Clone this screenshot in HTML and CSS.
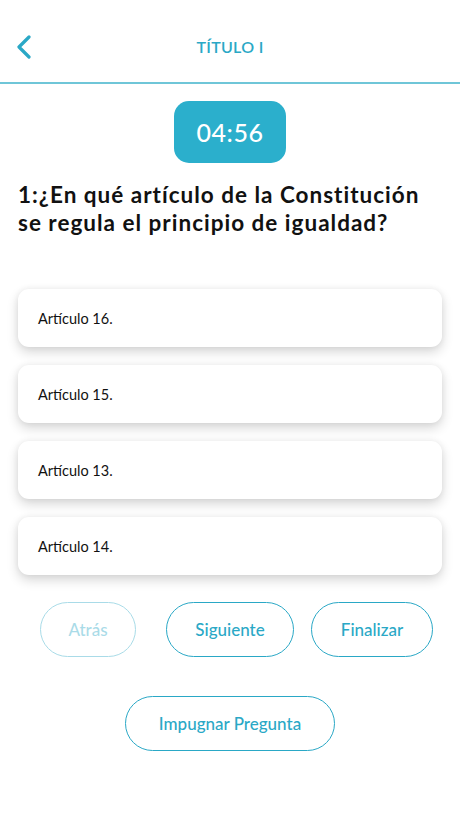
FILE: index.html
```html
<!DOCTYPE html>
<html lang="es">
<head>
<meta charset="utf-8">
<title>Título I</title>
<link rel="stylesheet" href="styles.css">
</head>
<body>
<header class="topbar">
  <button class="back" aria-label="Volver">
    <svg width="16" height="24" viewBox="0 0 16 24"><path d="M13 2 L3 12 L13 22" fill="none" stroke="#2aa8c6" stroke-width="3.2" stroke-linecap="round" stroke-linejoin="round"/></svg>
  </button>
  <h1 class="title">TÍTULO I</h1>
</header>
<main class="content">
  <div class="timer-wrap"><div class="timer">04:56</div></div>
  <p class="question">1:¿En qué artículo de la Constitución se regula el principio de igualdad?</p>
  <ul class="answers">
    <li class="answer">Artículo 16.</li>
    <li class="answer">Artículo 15.</li>
    <li class="answer">Artículo 13.</li>
    <li class="answer">Artículo 14.</li>
  </ul>
  <div class="nav">
    <button class="pill pill-disabled pill-back">Atrás</button>
    <button class="pill pill-next">Siguiente</button>
    <button class="pill pill-end">Finalizar</button>
  </div>
  <div class="report">
    <button class="pill pill-report">Impugnar Pregunta</button>
  </div>
</main>
</body>
</html>
```
FILE: styles.css
```css
* { box-sizing: border-box; }
html, body { margin: 0; padding: 0; background: #fff; }
body {
  width: 460px;
  height: 818px;
  font-family: "Lato", "Noto Sans", sans-serif;
  color: #111;
  overflow: hidden;
}
.topbar {
  height: 84px;
  padding-top: 35px;
  border-bottom: 2px solid #6fc6d8;
  display: flex;
  justify-content: center;
  position: relative;
}
.back {
  position: absolute;
  left: 15px;
  top: 35px;
  padding: 0;
  border: 0;
  background: none;
  width: 18px;
  height: 26px;
}
.title {
  margin: 0;
  font-size: 16px;
  line-height: 24px;
  font-weight: 600;
  color: #2aa8c6;
  letter-spacing: 0.3px;
}
.content { padding: 17px 18px 0; }
.timer-wrap { display: flex; justify-content: center; }
.timer {
  width: 112px;
  height: 62px;
  border-radius: 15px;
  background: #2bafcc;
  color: #fff;
  font-size: 25px;
  font-weight: 500;
  display: flex;
  align-items: center;
  justify-content: center;
  letter-spacing: 0.5px;
}
.question {
  margin: 18px 0 0;
  max-width: 418px;
  font-size: 22.5px;
  line-height: 28px;
  font-weight: 700;
  letter-spacing: 1px;
  color: #111;
}
.answers {
  list-style: none;
  margin: 52px 0 0;
  padding: 0;
  display: flex;
  flex-direction: column;
  gap: 18px;
}
.answer {
  height: 58px;
  border-radius: 11px;
  background: #fff;
  box-shadow: 0 5px 12px rgba(0,0,0,0.16), 0 0 6px rgba(0,0,0,0.06);
  display: flex;
  align-items: center;
  padding-left: 20px;
  font-size: 14.5px;
  color: #111;
}
.nav {
  margin-top: 27px;
  display: flex;
  padding-left: 22px;
}
.pill {
  height: 55px;
  border: 1.5px solid #2aa8c6;
  border-radius: 28px;
  background: #fff;
  color: #2aa8c6;
  font-family: inherit;
  font-size: 17px;
  font-weight: 500;
  padding: 0;
}
.pill-back { width: 96px; }
.pill-next { width: 128px; margin-left: 30px; }
.pill-end { width: 122px; margin-left: 17px; }
.pill-disabled { opacity: 0.4; }
.report {
  margin-top: 39px;
  display: flex;
  justify-content: center;
}
.pill-report { width: 210px; }
```
